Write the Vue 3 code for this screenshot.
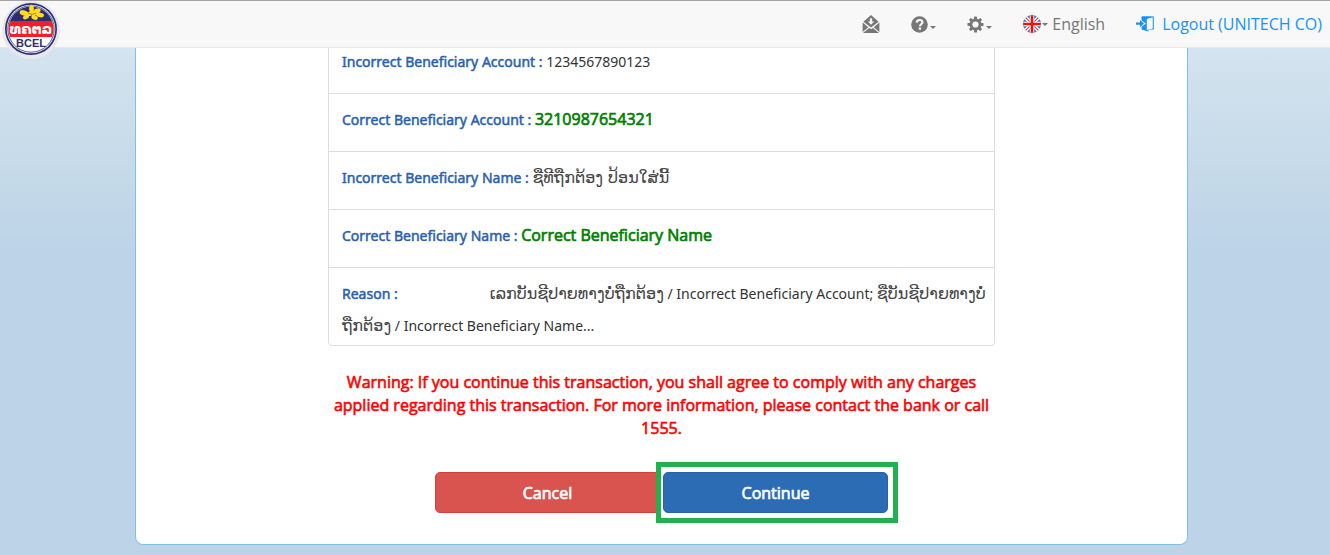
<script setup>
const details = [
  { label: 'Incorrect Beneficiary Account :', parts: [{ text: '1234567890123' }] },
  { label: 'Correct Beneficiary Account :', parts: [{ text: '3210987654321', kind: 'correct' }] },
  { label: 'Incorrect Beneficiary Name :', parts: [{ text: 'ຊືທີຖືກຕ້ອງ ປ້ອນໃສ່ນີ້', kind: 'lao' }] },
  { label: 'Correct Beneficiary Name :', parts: [{ text: 'Correct Beneficiary Name', kind: 'correct' }] },
  {
    label: 'Reason :',
    wide: true,
    parts: [
      { text: 'ເລກບັນຊີປາຍທາງບໍ່ຖືກຕ້ອງ', kind: 'lao' },
      { text: ' / Incorrect Beneficiary Account; ' },
      { text: 'ຊືບັນຊີປາຍທາງບໍ່ຖືກຕ້ອງ', kind: 'lao' },
      { text: ' / Incorrect Beneficiary Name...' },
    ],
  },
]
</script>

<template>
  <div class="page">
    <header class="navbar">
      <a class="brand" href="#" aria-label="BCEL">
        <svg viewBox="0 0 62 62" width="62" height="62">
          <defs>
            <clipPath id="disc"><circle cx="31" cy="29" r="22.5" /></clipPath>
          </defs>
          <circle cx="31" cy="30" r="29" fill="#e8e8e8" />
          <circle cx="31" cy="29" r="26" fill="#2c2e78" />
          <circle cx="31" cy="29" r="24.3" fill="#fff" />
          <circle cx="31" cy="29" r="23.2" fill="none" stroke="#2c2e78" stroke-width=".8" />
          <g clip-path="url(#disc)">
            <rect x="6" y="4" width="50" height="18" fill="#2c2e72" />
            <rect x="6" y="21" width="50" height="16" fill="#f01f2b" />
          </g>
          <g fill="#ffdc20">
            <ellipse cx="24" cy="13" rx="4.5" ry="2.6" transform="rotate(15 24 13)" />
            <ellipse cx="26" cy="17" rx="3.2" ry="2" transform="rotate(-25 26 17)" />
            <ellipse cx="31.5" cy="8.5" rx="2.4" ry="3.6" />
            <ellipse cx="37" cy="11" rx="3.8" ry="2.4" transform="rotate(-25 37 11)" />
            <ellipse cx="40" cy="15" rx="4" ry="2.4" transform="rotate(10 40 15)" />
            <ellipse cx="34.5" cy="17.5" rx="3.4" ry="2.2" transform="rotate(20 34.5 17.5)" />
            <path d="M27 13 32 10 37 13 35 16 28 16z" />
          </g>
          <path d="M28 13l4 1.5 4-1.5M31.5 14.5v3" stroke="#7f7135" fill="none" stroke-width=".8" />
          <text x="31" y="34" class="logo-lao" text-anchor="middle">ທຄຕລ</text>
          <text x="31" y="47" class="logo-latin" text-anchor="middle">BCEL</text>
        </svg>
      </a>
      <nav class="menu" aria-label="Main">
        <a class="item inbox" href="#" aria-label="Messages">
          <svg viewBox="0 0 18 19" width="18" height="19">
            <path d="M9 0 16.6 6.8 9 12.6 1.4 6.8z" fill="#777" />
            <path d="M.6 7.6 6.3 12.2.6 17zM17.4 7.6 11.7 12.2 17.4 17zM7.1 12.9 9 14.2 10.9 12.9 17 18H1z" fill="#777" />
            <path d="M7.9 3.2h2.2v3.2h2L9 9.8 5.9 6.4h2z" fill="#f8f8f8" />
          </svg>
        </a>
        <button class="item help" type="button" aria-label="Help">
          <svg viewBox="0 0 17 17" width="17" height="17">
            <circle cx="8.5" cy="8.5" r="8.3" fill="#777" />
            <path d="M5.7 6.6C5.8 4.8 7 4 8.6 4c1.6 0 2.8.8 2.8 2.3 0 1.9-2.5 2-2.5 4" fill="none" stroke="#f8f8f8" stroke-width="2.2" />
            <rect x="7.7" y="11.4" width="2.4" height="2.3" fill="#f8f8f8" />
          </svg>
          <span class="caret"></span>
        </button>
        <button class="item settings" type="button" aria-label="Settings">
          <svg viewBox="0 0 17 17" width="17" height="17">
            <g fill="#777">
              <rect x="7" y="0.5" width="3" height="16" rx=".6" />
              <rect x="7" y="0.5" width="3" height="16" rx=".6" transform="rotate(45 8.5 8.5)" />
              <rect x="7" y="0.5" width="3" height="16" rx=".6" transform="rotate(90 8.5 8.5)" />
              <rect x="7" y="0.5" width="3" height="16" rx=".6" transform="rotate(135 8.5 8.5)" />
              <circle cx="8.5" cy="8.5" r="6" />
            </g>
            <circle cx="8.5" cy="8.5" r="3.1" fill="#f8f8f8" />
          </svg>
          <span class="caret"></span>
        </button>
        <button class="item language" type="button">
          <svg viewBox="0 0 18 18" width="18" height="18">
            <defs>
              <clipPath id="round"><circle cx="9" cy="9" r="9" /></clipPath>
            </defs>
            <g clip-path="url(#round)">
              <rect width="18" height="18" fill="#2581c8" />
              <path d="M0 0 18 18M18 0 0 18" stroke="#fff" stroke-width="4" />
              <path d="M0 0 18 18M18 0 0 18" stroke="#ee3b3b" stroke-width="1.2" />
              <path d="M9 0V18M0 9H18" stroke="#fff" stroke-width="4.4" />
              <path d="M9 0V18M0 9H18" stroke="#f01010" stroke-width="2.6" />
            </g>
          </svg>
          <span class="caret tight"></span>
          <span class="text">English</span>
        </button>
        <a class="item logout" href="#">
          <svg viewBox="0 0 18 16" width="18" height="16">
            <path d="M6 1H17.2V13H13" fill="none" stroke="#1493ff" stroke-width="1.2" />
            <path d="M5.5.5H17L12.5 2.5V15.5L5.5 13.5V11L9.8 7.6 5.5 4.2z" fill="#1493ff" />
            <path d="M10.8 3 16.4 1.8V12.6L10.8 14z" fill="#f8f8f8" />
            <path d="M0 6.5H4V4L8 7.6 4 11.2V8.7H0z" fill="#1493ff" />
          </svg>
          <span class="text">Logout (UNITECH CO)</span>
        </a>
      </nav>
    </header>

    <main class="card">
      <ul class="details">
        <li v-for="d in details" :key="d.label" :class="{ last: d.wide }">
          <span class="label" :class="{ wide: d.wide }">{{ d.label }}</span>
          {{ ' ' }}<span v-for="(p, i) in d.parts" :key="i" :class="p.kind">{{ p.text }}</span>
        </li>
      </ul>
      <p class="warning">
        Warning: If you continue this transaction, you shall agree to comply with any charges applied
        regarding this transaction. For more information, please contact the bank or call 1555.
      </p>
      <div class="actions">
        <button class="btn cancel" type="button">Cancel</button>
        <div class="highlight">
          <button class="btn continue" type="button">Continue</button>
        </div>
      </div>
    </main>
  </div>
</template>

<style>
body {
  margin: 0;
  background: #bdd4e8;
}
</style>

<style scoped>
.page {
  box-sizing: border-box;
  min-height: 100vh;
  padding-bottom: 10px;
  background: linear-gradient(#d4e4f0 48px, #cee0ec 90px, #c3d8e8 190px, #bdd4e8 245px);
  font-family: "Noto Sans", "DejaVu Sans", sans-serif;
  font-size: 14px;
  color: #333;
}
.navbar {
  position: relative;
  z-index: 1;
  box-sizing: border-box;
  height: 48px;
  display: flex;
  justify-content: flex-end;
  padding-right: 8px;
  border-top: 1px solid #a5a5a5;
  border-bottom: 1px solid #e7e7e7;
  background: #f8f8f8;
}
.brand {
  position: absolute;
  left: 0;
  top: -1px;
  height: 62px;
}
.logo-lao {
  font: bold 14px "DejaVu Sans", sans-serif;
  fill: #fff;
}
.logo-latin {
  font: bold 11px "Liberation Sans", sans-serif;
  fill: #2c2e72;
}
.menu {
  display: flex;
  align-items: center;
}
.item {
  display: flex;
  align-items: center;
  padding: 0;
  border: 0;
  background: none;
  font-family: "Open Sans", sans-serif;
  font-size: 16px;
  line-height: 20px;
  color: #777;
  text-decoration: none;
}
.help,
.settings,
.language,
.logout {
  margin-left: 31px;
}
.caret {
  align-self: flex-end;
  margin: 0 0 4px 2px;
  border: 3px solid transparent;
  border-top-color: #777;
  border-bottom: 0;
}
.caret.tight {
  align-self: center;
  margin: 0 4px 0 1px;
}
.logout {
  gap: 8px;
  color: #1493ff;
}
.card {
  box-sizing: border-box;
  display: flex;
  flex-direction: column;
  align-items: center;
  margin: 0 142px 0 135px;
  padding-bottom: 21px;
  border: 1px solid #7fc1e6;
  border-top: 0;
  border-radius: 0 0 8px 8px;
  background: #fff;
}
.details {
  box-sizing: border-box;
  width: 100%;
  max-width: 667px;
  margin: -13px 0 0;
  padding: 0;
  list-style: none;
  border: 1px solid #ddd;
  border-radius: 4px;
}
.details li {
  padding: 10px 6px 15px 13px;
  line-height: 32px;
}
.details li + li {
  border-top: 1px solid #ddd;
}
.details .last {
  padding-bottom: 3px;
}
.label {
  color: #2a5fae;
  -webkit-text-stroke: 0.5px;
}
.label.wide {
  display: inline-block;
  width: 144px;
}
.lao {
  font-family: "DejaVu Sans", sans-serif;
  font-size: 16px;
  line-height: 16px;
  color: #444;
}
.correct {
  font-family: "Open Sans", sans-serif;
  font-size: 16px;
  line-height: 16px;
  color: #008000;
  -webkit-text-stroke: 0.7px;
}
.warning {
  max-width: 660px;
  margin: 25px 0 0;
  font-family: "Open Sans", sans-serif;
  font-size: 16px;
  line-height: 23px;
  text-align: center;
  color: #f00;
  -webkit-text-stroke: 0.6px;
}
.actions {
  display: flex;
  align-items: center;
  margin-top: 22px;
  margin-left: 10px;
}
.btn {
  box-sizing: border-box;
  width: 225px;
  height: 41px;
  border: 1px solid;
  border-radius: 5px;
  font-family: "Open Sans", sans-serif;
  font-size: 16px;
  color: #fff;
  -webkit-text-stroke: 0.7px;
}
.cancel {
  margin-right: -4px;
  border-color: #d43f3a;
  background: #d9534f;
}
.highlight {
  position: relative;
  padding: 5px 5px 5px 2px;
  border: 5px solid #22b14c;
  background: #fff;
}
.continue {
  display: block;
  border-color: #2a62a8;
  background: #2c6cb5;
}
</style>
